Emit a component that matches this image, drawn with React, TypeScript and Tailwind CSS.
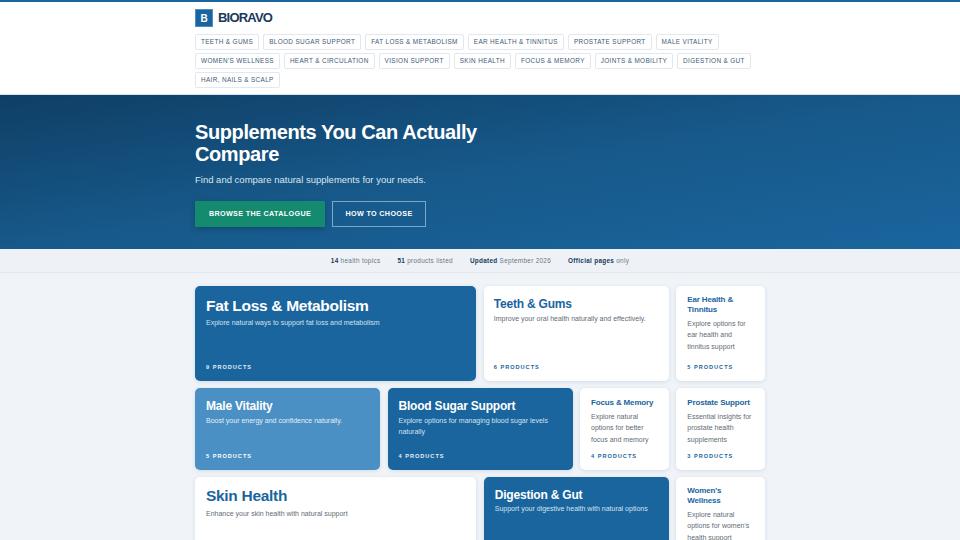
const tags = [
  "Teeth & Gums",
  "Blood Sugar Support",
  "Fat Loss & Metabolism",
  "Ear Health & Tinnitus",
  "Prostate Support",
  "Male Vitality",
  "Women's Wellness",
  "Heart & Circulation",
  "Vision Support",
  "Skin Health",
  "Focus & Memory",
  "Joints & Mobility",
  "Digestion & Gut",
  "Hair, Nails & Scalp",
];

type CardProps = {
  title: string;
  text: string;
  count: string;
  className: string;
  titleClass: string;
  textClass: string;
  countClass: string;
};

function Card({ title, text, count, className, titleClass, textClass, countClass }: CardProps) {
  return (
    <div className={`flex flex-col rounded-[5px] shadow-[0_1px_4px_rgba(26,74,110,0.14)] ${className}`}>
      <h3 className={`font-bold ${titleClass}`}>{title}</h3>
      <p className={textClass}>{text}</p>
      <div className={`mt-auto text-[5.6px] leading-[8px] font-bold tracking-[1px] uppercase ${countClass}`}>{count}</div>
    </div>
  );
}

const blue = "bg-[#1a659e] px-[11px] pt-[10px] pb-[10px]";
const white = "bg-white px-[10px] pb-[10px]";
const small = "col-span-1 bg-white px-[11px] pb-[10px]";
const lightText = "text-[7px] leading-[11.3px] text-[#d3e2ee]";
const greyText = "text-[7px] leading-[11.3px] text-[#5f6b76]";
const smallTitle = "text-[8px] leading-[10px] tracking-[-0.15px] text-[#1a659e]";
const bigTitle = "text-[15.5px] leading-[20px] tracking-[-0.3px]";
const midTitle = "text-[12px] leading-[16px] tracking-[-0.2px]";

export default function App() {
  return (
    <div className="h-[540px] overflow-hidden bg-[#f0f4f8] font-['Liberation_Sans',Arial,sans-serif]">
      <header className="h-[95px] border-t-2 border-b border-t-[#1a659e] border-b-[#d5e3ee] bg-white">
        <div className="mx-auto w-[570px] pt-[7px]">
          <div className="flex items-center gap-[5px]">
            <div className="flex h-[18px] w-[18px] items-center justify-center border border-[#4a90c4] bg-[#1a659e] text-[10px] font-bold text-white">
              B
            </div>
            <span className="text-[13px] leading-[18px] font-bold tracking-[-0.8px] text-[#1a3a5c]">BIORAVO</span>
          </div>
          <nav className="mt-[7px] flex flex-wrap gap-x-[4px] gap-y-[3px]">
            {tags.map((t) => (
              <a
                key={t}
                className="flex h-[16px] items-center rounded-[2px] border border-[#e3e8ee] bg-white px-[5px] text-[6.4px] tracking-[0.35px] text-[#3d5a78] uppercase"
              >
                {t}
              </a>
            ))}
          </nav>
        </div>
      </header>

      <section className="h-[154px] bg-gradient-to-br from-[#0f3f66] via-[#17598a] to-[#1a659e]">
        <div className="mx-auto w-[570px] pt-[26px]">
          <h1 className="w-[320px] text-[20px] leading-[22px] font-bold tracking-[-0.4px] text-white">Supplements You Can Actually Compare</h1>
          <p className="mt-[8px] text-[9.5px] leading-[14px] text-[#d9e6f0]">Find and compare natural supplements for your needs.</p>
          <div className="mt-[14px] flex gap-[7px]">
            <a className="flex h-[26px] w-[130px] items-center justify-center bg-[#148a6e] text-[7.2px] font-bold tracking-[0.35px] text-white uppercase shadow-[0_2px_6px_rgba(0,0,0,0.2)]">
              Browse the catalogue
            </a>
            <a className="flex h-[26px] w-[94px] items-center justify-center border border-[#7aa8cc] text-[7.2px] font-bold tracking-[0.35px] text-white uppercase">
              How to choose
            </a>
          </div>
        </div>
      </section>

      <div className="flex h-[24px] items-center justify-center gap-[17px] border-b border-[#e2e7ec] bg-[#eef2f6] text-[6.4px] tracking-[0.3px] text-[#6b7785]">
        <span><b className="text-[#1a3a5c]">14</b> health topics</span>
        <span><b className="text-[#1a3a5c]">51</b> products listed</span>
        <span><b className="text-[#1a3a5c]">Updated</b> September 2026</span>
        <span><b className="text-[#1a3a5c]">Official pages</b> only</span>
      </div>

      <main className="mx-auto grid w-[570px] grid-cols-6 grid-rows-[95px_82px_120px] gap-x-[7.5px] gap-y-[7px] pt-[13px]">
        <Card
          title="Fat Loss & Metabolism"
          text="Explore natural ways to support fat loss and metabolism"
          count="9 products"
          className={`col-span-3 ${blue}`}
          titleClass={`${bigTitle} text-white`}
          textClass={`mt-[1px] ${lightText}`}
          countClass="text-[#e4eef6]"
        />
        <Card
          title="Teeth & Gums"
          text="Improve your oral health naturally and effectively."
          count="6 products"
          className={`col-span-2 pt-[10px] ${white}`}
          titleClass={`${midTitle} text-[#1a659e]`}
          textClass={`mt-[1px] ${greyText}`}
          countClass="text-[#1a659e]"
        />
        <Card
          title="Ear Health & Tinnitus"
          text="Explore options for ear health and tinnitus support"
          count="5 products"
          className={`pt-[9px] ${small}`}
          titleClass={smallTitle}
          textClass={`mt-[3px] ${greyText}`}
          countClass="text-[#1a659e]"
        />

        <Card
          title="Male Vitality"
          text="Boost your energy and confidence naturally."
          count="5 products"
          className="col-span-2 bg-[#4a90c4] px-[11px] pt-[10px] pb-[10px]"
          titleClass={`${midTitle} text-white`}
          textClass="mt-[1px] text-[7px] leading-[11.3px] text-[#e4eef6]"
          countClass="text-white"
        />
        <Card
          title="Blood Sugar Support"
          text="Explore options for managing blood sugar levels naturally"
          count="4 products"
          className={`col-span-2 ${blue}`}
          titleClass={`${midTitle} text-white`}
          textClass={`mt-[1px] ${lightText}`}
          countClass="text-[#e4eef6]"
        />
        <Card
          title="Focus & Memory"
          text="Explore natural options for better focus and memory"
          count="4 products"
          className={`pt-[10px] ${small}`}
          titleClass={smallTitle}
          textClass={`mt-[3px] ${greyText}`}
          countClass="text-[#1a659e]"
        />
        <Card
          title="Prostate Support"
          text="Essential insights for prostate health supplements"
          count="3 products"
          className={`pt-[10px] ${small}`}
          titleClass={smallTitle}
          textClass={`mt-[3px] ${greyText}`}
          countClass="text-[#1a659e]"
        />

        <Card
          title="Skin Health"
          text="Enhance your skin health with natural support"
          count="7 products"
          className="col-span-3 bg-white px-[11px] pt-[9px] pb-[10px]"
          titleClass={`${bigTitle} text-[#1a659e]`}
          textClass={`mt-[1.5px] ${greyText}`}
          countClass="text-[#1a659e]"
        />
        <Card
          title="Digestion & Gut"
          text="Support your digestive health with natural options"
          count="5 products"
          className={`col-span-2 ${blue}`}
          titleClass={`${midTitle} text-white`}
          textClass={lightText}
          countClass="text-[#e4eef6]"
        />
        <Card
          title="Women's Wellness"
          text="Explore natural options for women's health support"
          count="4 products"
          className={`pt-[9px] ${small}`}
          titleClass={smallTitle}
          textClass={`mt-[3px] ${greyText}`}
          countClass="text-[#1a659e]"
        />
      </main>
    </div>
  );
}
